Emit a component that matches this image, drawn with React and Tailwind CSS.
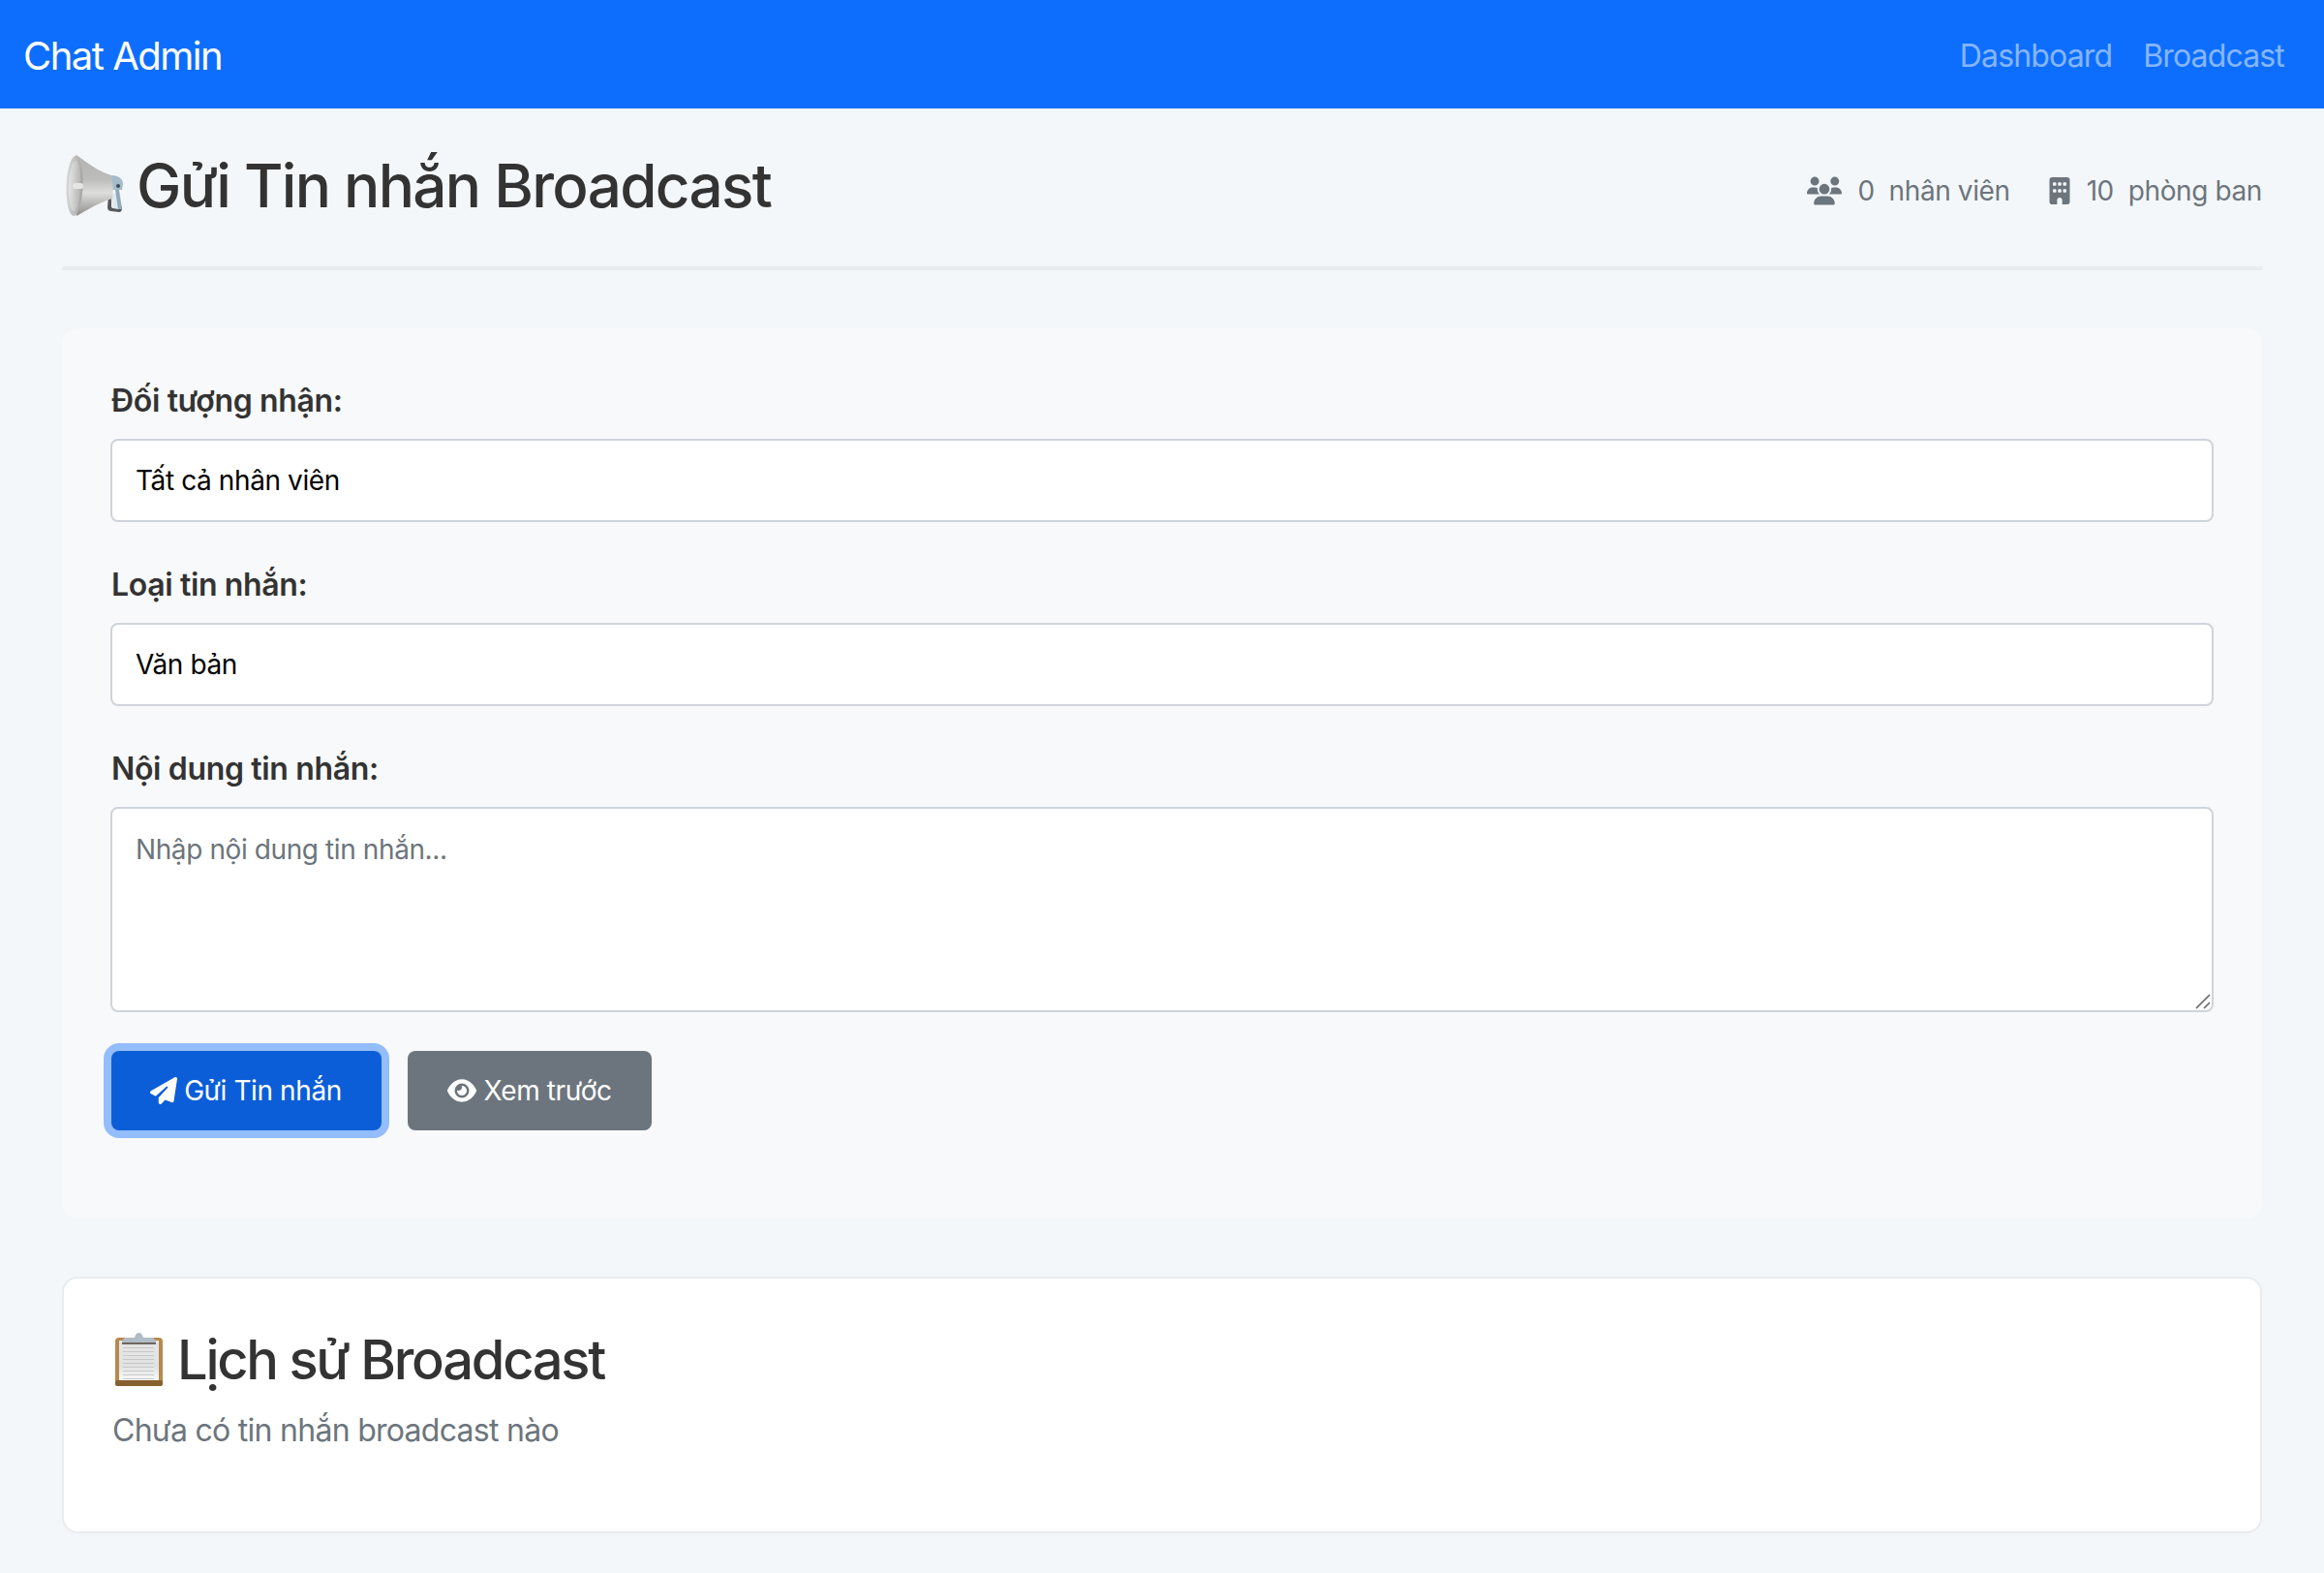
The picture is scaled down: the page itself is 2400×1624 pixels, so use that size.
import { FaUsers, FaBuilding, FaPaperPlane, FaEye } from 'react-icons/fa6';

function MegaphoneEmoji() {
  return (
    <svg width="60" height="64" viewBox="0 0 60 64" className="ml-1 shrink-0" aria-hidden>
      <defs>
        <linearGradient id="horn" x1="0" y1="0" x2="0" y2="1">
          <stop offset="0" stopColor="#b4b4b2" />
          <stop offset="0.4" stopColor="#bcbcba" />
          <stop offset="0.62" stopColor="#dededc" />
          <stop offset="1" stopColor="#8c8c8a" />
        </linearGradient>
        <linearGradient id="mouth" x1="0" y1="0" x2="1" y2="0">
          <stop offset="0" stopColor="#d8d8d8" />
          <stop offset="1" stopColor="#a4a4a2" />
        </linearGradient>
        <linearGradient id="mouthIn" x1="0" y1="0" x2="1" y2="0">
          <stop offset="0" stopColor="#e4e4e4" />
          <stop offset="1" stopColor="#b6b6b4" />
        </linearGradient>
      </defs>
      <path d="M44 42 L43 54 C43 57 45 58 47 58 L55 59 C57 59 58 57 58 55 L57 52 L55 56 L47 54 L47 42 Z" fill="#55585c" />
      <path d="M47 40 H54 L57 56 L48 55 Z" fill="#dfe8ef" />
      <path d="M51 36 H55 L58 56 H54 Z" fill="#8fa9bd" />
      <path d="M47 21 C53 21 59 24 59 30 L58 36 L47 36 Z" fill="#a3bbcd" />
      <circle cx="54" cy="32" r="2" fill="#3d4a55" />
      <path d="M10 0 C15 1 26 14 47 21 C49 26 49 40 48 45 C36 48 20 58 11 63 Z" fill="url(#horn)" />
      <ellipse cx="9" cy="32" rx="8.5" ry="31" fill="url(#mouth)" transform="rotate(2 9 32)" />
      <ellipse cx="9" cy="32" rx="6" ry="26" fill="url(#mouthIn)" transform="rotate(2 9 32)" />
      <rect x="7" y="29" width="11" height="6" rx="3" fill="#e6e6e4" />
    </svg>
  );
}

function ClipboardEmoji() {
  const lines = [16, 20, 24, 28, 32, 36, 40, 44, 48];
  return (
    <svg width="49" height="56" viewBox="0 0 49 56" className="ml-[3px] shrink-0" aria-hidden>
      <defs>
        <linearGradient id="sheet" x1="0" y1="0" x2="0" y2="1">
          <stop offset="0" stopColor="#e6e6e6" />
          <stop offset="0.65" stopColor="#e2e2e2" />
          <stop offset="1" stopColor="#fafafa" />
        </linearGradient>
      </defs>
      <rect x="0" y="5" width="49" height="50" rx="4" fill="#b68a4c" />
      <rect x="0" y="49" width="49" height="6" rx="2" fill="#86602f" />
      <rect x="4" y="8" width="41" height="41" fill="url(#sheet)" />
      <path d="M10 5 H20 C21 1 23 0 24.5 0 C26 0 28 1 29 5 H39 L42 8 V10 H7 V8 Z" fill="#b2bcc6" />
      <rect x="7" y="10" width="35" height="2" fill="#6f675e" />
      {lines.map((y) => (
        <rect key={y} x="8" y={y - 1} width="32" height="1" fill="#c8c8c8" />
      ))}
    </svg>
  );
}

export default function App() {
  return (
    <div className="min-h-screen bg-[#f4f7fa] font-['Inter','Liberation_Sans',sans-serif] text-[#333333]">
      <nav className="flex h-[112px] items-center justify-between bg-[#0d6efd] pl-6 pr-[41px] pt-[3px]">
        <a className="text-[40px] leading-none tracking-[-1.5px] text-white">Chat Admin</a>
        <div className="flex items-center gap-8 text-[32px] tracking-[-0.85px] text-[#86b6fe]">
          <a>Dashboard</a>
          <a>Broadcast</a>
        </div>
      </nav>

      <main className="px-16">
        <header className="flex h-[167px] items-center justify-between border-b-4 border-[#e9ecef] pb-[3px]">
          <h1 className="flex items-center gap-[13px] text-[62px] font-medium leading-none tracking-[-1.7px]">
            <MegaphoneEmoji />
            Gửi Tin nhắn Broadcast
          </h1>
          <div className="flex items-center gap-[37px] pt-[10px] text-[28px] tracking-[-0.4px] text-[#6c757d]">
            <span className="flex items-center gap-4">
              <FaUsers className="text-[36px]" />
              0 &nbsp;nhân viên
            </span>
            <span className="flex items-center gap-[14px]">
              <FaBuilding className="text-[28px]" />
              10 &nbsp;phòng ban
            </span>
          </div>
        </header>

        <section className="mt-[60px] h-[919px] rounded-2xl bg-[#f8f9fa] p-[50px]">
          <label className="block pl-px pt-px text-[32px] font-semibold leading-[47px] tracking-[-0.35px]">Đối tượng nhận:</label>
          <select className="mt-[16px] block h-[86px] w-full appearance-none rounded-lg border-2 border-[#ced4da] bg-white px-6 text-[28px] tracking-[-0.4px] text-black">
            <option>Tất cả nhân viên</option>
          </select>
          <label className="mt-10 block pl-px pt-px text-[32px] font-semibold leading-[47px] tracking-[-0.35px]">Loại tin nhắn:</label>
          <select className="mt-[16px] block h-[86px] w-full appearance-none rounded-lg border-2 border-[#ced4da] bg-white px-6 text-[28px] tracking-[-0.4px] text-black">
            <option>Văn bản</option>
          </select>
          <label className="mt-10 block pl-px pt-px text-[32px] font-semibold leading-[47px] tracking-[-0.35px]">Nội dung tin nhắn:</label>
          <div className="relative mt-[16px]">
            <textarea
              placeholder="Nhập nội dung tin nhắn..."
              className="block h-[212px] w-full resize-none rounded-lg border-2 border-[#ced4da] bg-white px-6 pb-4 pt-[21px] text-[28px] tracking-[-0.4px] text-black placeholder:text-[#6c757d]"
            />
            <svg width="16" height="16" viewBox="0 0 16 16" className="absolute bottom-[3px] right-[3px]" aria-hidden>
              <path d="M1 15 L15 1 M9 15 L15 9" stroke="#666666" strokeWidth="1.6" fill="none" />
            </svg>
          </div>
          <div className="mt-10 flex items-center gap-[27px] pl-px">
            <button className="flex h-[82px] w-[279px] items-center justify-center gap-[7px] rounded-lg bg-[#0b5ed7] pr-px text-[28px] tracking-[-0.4px] text-white shadow-[0_0_0_8px_#93bdfc]">
              <FaPaperPlane className="text-[28px]" />
              Gửi Tin nhắn
            </button>
            <button className="flex h-[82px] w-[252px] items-center justify-center gap-[7px] rounded-lg bg-[#6c757d] text-[28px] tracking-[-0.4px] text-white">
              <FaEye className="text-[30px]" />
              Xem trước
            </button>
          </div>
        </section>

        <section className="mt-[60px] h-[265px] rounded-2xl border-2 border-[#e9ecef] bg-white px-[50px] pt-[56px]">
          <h2 className="flex items-center gap-[15px] text-[56px] font-medium leading-none tracking-[-2.25px]">
            <ClipboardEmoji />
            Lịch sử Broadcast
          </h2>
          <p className="mt-[21px] text-[32px] tracking-[-0.72px] text-[#6c757d]">Chưa có tin nhắn broadcast nào</p>
        </section>
      </main>
    </div>
  );
}
